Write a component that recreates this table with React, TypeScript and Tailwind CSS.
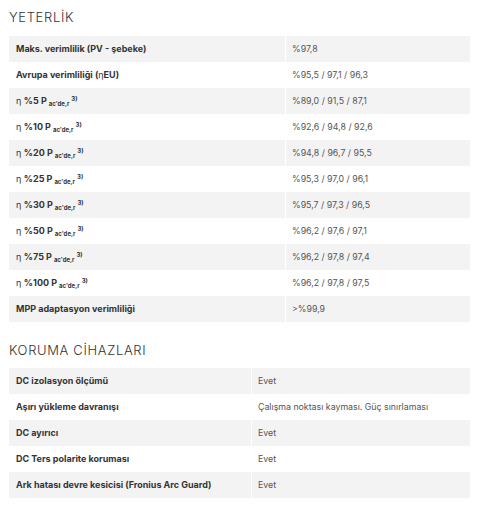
import React from "react";

type Row = { label: React.ReactNode; value: string };

const font = { fontFamily: "Inter, 'Noto Sans', sans-serif" };

const Eta = ({ pct }: { pct: string }) => (
  <span>
    <span className="font-normal">η </span>
    <span className="font-bold">%{pct} P</span>
    <sub className="ml-[2px] text-[6px] font-bold">ac'de,r</sub>
    <sup className="ml-[2px] text-[6px] font-bold">3)</sup>
  </span>
);

const efficiency: Row[] = [
  { label: <span className="font-bold">Maks. verimlilik (PV - şebeke)</span>, value: "%97,8" },
  {
    label: (
      <span className="font-bold">
        Avrupa verimliliği (<span className="font-normal">η</span>EU)
      </span>
    ),
    value: "%95,5 / 97,1 / 96,3",
  },
  { label: <Eta pct="5" />, value: "%89,0 / 91,5 / 87,1" },
  { label: <Eta pct="10" />, value: "%92,6 / 94,8 / 92,6" },
  { label: <Eta pct="20" />, value: "%94,8 / 96,7 / 95,5" },
  { label: <Eta pct="25" />, value: "%95,3 / 97,0 / 96,1" },
  { label: <Eta pct="30" />, value: "%95,7 / 97,3 / 96,5" },
  { label: <Eta pct="50" />, value: "%96,2 / 97,6 / 97,1" },
  { label: <Eta pct="75" />, value: "%96,2 / 97,8 / 97,4" },
  { label: <Eta pct="100" />, value: "%96,2 / 97,8 / 97,5" },
  { label: <span className="font-bold">MPP adaptasyon verimliliği</span>, value: ">%99,9" },
];

const protection: Row[] = [
  { label: <span className="font-bold">DC izolasyon ölçümü</span>, value: "Evet" },
  { label: <span className="font-bold">Aşırı yükleme davranışı</span>, value: "Çalışma noktası kayması. Güç sınırlaması" },
  { label: <span className="font-bold">DC ayırıcı</span>, value: "Evet" },
  { label: <span className="font-bold">DC Ters polarite koruması</span>, value: "Evet" },
  { label: <span className="font-bold">Ark hatası devre kesicisi (Fronius Arc Guard)</span>, value: "Evet" },
];

function SpecTable({ rows, labelWidth }: { rows: Row[]; labelWidth: string }) {
  return (
    <div className="flex flex-col">
      {rows.map((r, i) => (
        <div key={i} className={`flex h-[26px] ${i % 2 === 0 ? "bg-[#f3f3f3]" : "bg-white"}`}>
          <div className={`${labelWidth} flex items-center border-r border-white pl-[7px] text-[9px] text-[#333]`}>
            {r.label}
          </div>
          <div className="flex flex-1 items-center pl-[6px] text-[8.8px] text-[#555]">{r.value}</div>
        </div>
      ))}
    </div>
  );
}

export default function App() {
  return (
    <div className="w-[485px] h-[518px] bg-white px-[9px] pt-[9px]" style={font}>
      <h2 className="text-[13px] font-light tracking-[0.05em] text-[#333] leading-[16px] mb-[11px]">YETERLİK</h2>
      <div className="w-[461px]">
        <SpecTable rows={efficiency} labelWidth="w-[277px]" />
      </div>
      <h2 className="mt-[20px] text-[13px] font-light tracking-[0.05em] text-[#333] leading-[16px] mb-[10px]">
        KORUMA CİHAZLARI
      </h2>
      <div className="w-[461px]">
        <SpecTable rows={protection} labelWidth="w-[243px]" />
      </div>
    </div>
  );
}
